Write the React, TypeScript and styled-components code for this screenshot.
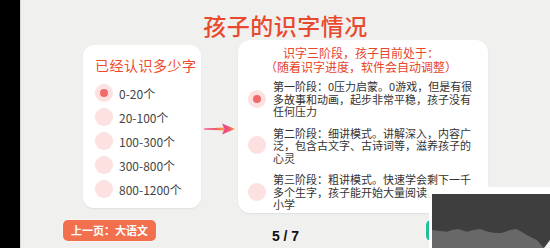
import React from "react";
import styled, { createGlobalStyle } from "styled-components";

const Global = createGlobalStyle`
  html, body { margin: 0; padding: 0; }
  body { width: 550px; height: 248px; overflow: hidden; background: #000; }
  #root { width: 550px; height: 248px; }
`;

const CJK = `"Noto Sans CJK SC", "Noto Sans", sans-serif`;

const Screen = styled.div`
  display: flex;
  width: 550px;
  height: 248px;
`;

const SideStrip = styled.div`
  width: 20px;
  background: #000;
  flex: none;
`;

const Main = styled.div`
  position: relative;
  flex: 1;
  display: flex;
  flex-direction: column;
  background: #f0f0ee;
  border-left: 1px solid #d9d9d7;
  font-family: ${CJK};
`;

const Title = styled.h1`
  margin: 0;
  padding-top: 10px;
  height: 30px;
  line-height: 30px;
  text-align: center;
  font-size: 23px;
  font-weight: 500;
  color: #e84a2f;
  letter-spacing: 0.5px;
`;

const ContentRow = styled.div`
  display: flex;
  align-items: center;
  height: 173px;
  padding-left: 62px;
`;

const Card = styled.div`
  background: #fff;
  border-radius: 11px;
  box-shadow: 0 1px 2px rgba(0, 0, 0, 0.07);
  box-sizing: border-box;
`;

const LevelCard = styled(Card)`
  width: 118px;
  height: 163px;
  padding: 10px 0 0 12px;
`;

const CardTitle = styled.div`
  font-size: 14px;
  line-height: 20px;
  color: #ee4b2b;
  letter-spacing: 0.5px;
  margin-bottom: 6px;
`;

const Option = styled.div`
  display: flex;
  align-items: center;
  height: 24px;
  gap: 6px;
  font-size: 12px;
  color: #444;
`;

const Radio = styled.span<{ $checked?: boolean }>`
  width: 18px;
  height: 18px;
  border-radius: 50%;
  background: #fde0e0;
  display: flex;
  align-items: center;
  justify-content: center;
  flex: none;
  &::after {
    content: "";
    width: 8px;
    height: 8px;
    border-radius: 50%;
    background: #f06868;
    display: ${(p) => (p.$checked ? "block" : "none")};
  }
`;

const ArrowBox = styled.div`
  width: 31px;
  height: 12px;
  margin: 5px 3px 0;
  display: flex;
`;

const StageCard = styled(Card)`
  width: 250px;
  height: 173px;
  padding: 6px 0 0 10px;
  border-radius: 12px;
`;

const StageHeader = styled.div`
  font-size: 12px;
  line-height: 14px;
  color: #e8452c;
  text-align: center;
  padding-right: 14px;
  margin-bottom: 6px;
  white-space: nowrap;
`;

const StageList = styled.div`
  display: flex;
  flex-direction: column;
  gap: 9px;
`;

const Stage = styled.div`
  display: flex;
  align-items: center;
  gap: 7px;
`;

const StageText = styled.div`
  font-size: 11px;
  line-height: 12.5px;
  color: #333;
  white-space: nowrap;
`;

const BottomBar = styled.div`
  display: grid;
  grid-template-columns: 1fr auto 1fr;
  align-items: start;
  margin-top: 7px;
  padding: 0 42px;
`;

const NavButton = styled.div<{ $color: string }>`
  height: 21px;
  line-height: 21px;
  padding: 0 8px;
  border-radius: 5px;
  background: ${(p) => p.$color};
  color: #fff;
  font-size: 11px;
  font-weight: 600;
  box-shadow: 0 0 0 1px rgba(255, 255, 255, 0.35);
  white-space: nowrap;
`;

const PrevCell = styled.div`
  justify-self: start;
`;

const NextCell = styled.div`
  justify-self: end;
`;

const PageIndicator = styled.div`
  margin-top: 8px;
  font-family: "Liberation Sans", Arial, sans-serif;
  font-weight: 700;
  font-size: 14px;
  line-height: 16px;
  color: #111;
`;

const FloatWindow = styled.div`
  position: absolute;
  left: 408px;
  top: 187px;
  right: 0;
  bottom: 0;
  background: #fff;
  padding: 7px 0 0 3px;
  box-sizing: border-box;
  display: flex;
`;

const FloatInner = styled.div`
  flex: 1;
  background: #3e3e3e;
  display: flex;
`;

const Arrow = () => (
  <svg width="31" height="12" viewBox="0 0 31 12">
    <defs>
      <linearGradient id="ag" x1="0" y1="0" x2="1" y2="0">
        <stop offset="0" stopColor="#ea3a8c" />
        <stop offset="0.6" stopColor="#f25e6a" />
        <stop offset="1" stopColor="#ff9d3d" />
      </linearGradient>
    </defs>
    <path d="M0 5.6 L20 4.4 L20 7.6 L0 6.6 Z" fill="url(#ag)" />
    <path d="M18 0.6 L31 6 L18 11.4 L20.5 6 Z" fill="url(#ag)" />
  </svg>
);

const Terrain = () => (
  <svg width="118" height="54" viewBox="0 0 118 54" preserveAspectRatio="none">
    <path
      d="M0 36 L8 37 L14.7 37.7 L20 36 L26 35 L34.7 37.7 L42 36 L48 35 L55 37.5 L61 38.7 L69.7 39 L78 36 L84.7 35 L90 38 L94.7 41 L104.7 46 L111 52.7 L112 54 L0 54 Z"
      fill="#686868"
    />
    <path d="M112 54 L118 46 L118 54 Z" fill="#f2f2f2" />
  </svg>
);

const levels = ["0-20个", "20-100个", "100-300个", "300-800个", "800-1200个"];

const stages: string[][] = [
  ["第一阶段：0压力启蒙。0游戏，但是有很", "多故事和动画，起步非常平稳，孩子没有", "任何压力"],
  ["第二阶段：细讲模式。讲解深入，内容广", "泛，包含古文字、古诗词等，滋养孩子的", "心灵"],
  ["第三阶段：粗讲模式。快速学会剩下一千", "多个生字，孩子能开始大量阅读，轻松上", "小学"],
];

export default function App() {
  return (
    <>
      <Global />
      <Screen>
        <SideStrip />
        <Main>
          <Title>孩子的识字情况</Title>
          <ContentRow>
            <LevelCard>
              <CardTitle>已经认识多少字</CardTitle>
              {levels.map((l, i) => (
                <Option key={l}>
                  <Radio $checked={i === 0} />
                  <span>{l}</span>
                </Option>
              ))}
            </LevelCard>
            <ArrowBox>
              <Arrow />
            </ArrowBox>
            <StageCard>
              <StageHeader>
                识字三阶段，孩子目前处于：
                <br />
                （随着识字进度，软件会自动调整）
              </StageHeader>
              <StageList>
                {stages.map((lines, i) => (
                  <Stage key={i}>
                    <Radio $checked={i === 0} />
                    <StageText>
                      {lines.map((t, j) => (
                        <React.Fragment key={j}>
                          {t}
                          {j < lines.length - 1 && <br />}
                        </React.Fragment>
                      ))}
                    </StageText>
                  </Stage>
                ))}
              </StageList>
            </StageCard>
          </ContentRow>
          <BottomBar>
            <PrevCell>
              <NavButton $color="#f3704f">上一页：大语文</NavButton>
            </PrevCell>
            <PageIndicator>5 / 7</PageIndicator>
            <NextCell>
              <NavButton $color="#20c09a">下一页：数学</NavButton>
            </NextCell>
          </BottomBar>
          <FloatWindow>
            <FloatInner>
              <Terrain />
            </FloatInner>
          </FloatWindow>
        </Main>
      </Screen>
    </>
  );
}
